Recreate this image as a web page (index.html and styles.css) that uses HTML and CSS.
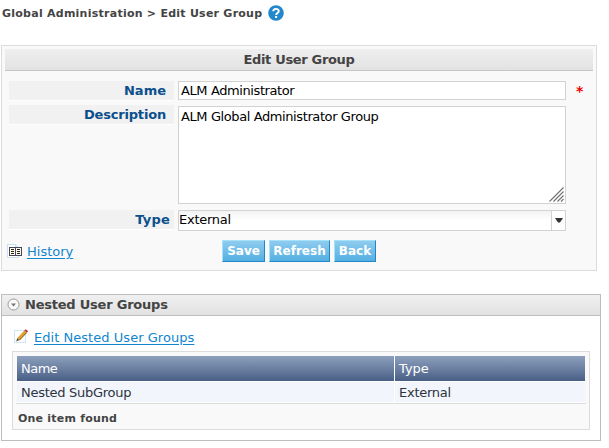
FILE: index.html
```
<!DOCTYPE html>
<html lang="en">
<head>
<meta charset="utf-8">
<title>Edit User Group</title>
<link rel="stylesheet" href="styles.css">
</head>
<body>
<header class="crumbs">
  <span class="t-crumb">Global Administration &gt; Edit User Group</span>
  <svg class="help" width="16" height="16" viewBox="0 0 16 16"><circle cx="8" cy="8" r="7.8" fill="#2388cb"/><path d="M5.2 6.3C5.2 3.1 10.8 3.1 10.8 6.1C10.8 8 8.1 8 8.1 10" fill="none" stroke="#fff" stroke-width="1.9"/><rect x="7.1" y="11" width="2" height="2" fill="#fff"/></svg>
</header>
<form class="panel">
  <h1 class="bar"><span class="t-head">Edit User Group</span></h1>
  <div class="row name">
    <label>Name</label>
    <div class="field"><span class="t-value">ALM Administrator</span></div>
    <span class="req">*</span>
  </div>
  <div class="row desc">
    <label><span class="t-desc">Description</span></label>
    <div class="field"><span class="t-value">ALM Global Administrator Group</span>
      <svg class="grip" width="15" height="15" viewBox="0 0 15 15"><path d="M.5 14.5L14.5 .5M4.5 14.5L14.5 4.5M8.5 14.5L14.5 8.5M12 14.5L14.5 12" stroke="#707070" stroke-width="1.1"/></svg>
    </div>
  </div>
  <div class="row type">
    <label><span class="t-type">Type</span></label>
    <div class="field select"><span class="t-ext">External</span><span class="arrow"><svg width="8" height="5" viewBox="0 0 8 5"><path d="M0 0H8L5 4.5H3Z" fill="#333"/></svg></span></div>
  </div>
  <div class="actions">
    <svg class="book" width="15" height="14" viewBox="0 0 15 14"><path d="M.5 .5H8.5L11.5 3.5V13.5H.5Z" fill="#fff" stroke="#c8e0f0"/><path d="M8.5 .5V3.5H11.5" fill="#d8eaf6" stroke="#c8e0f0"/><rect x="2.5" y="3.5" width="12" height="8" fill="#fff8e8" stroke="#44485c"/><path d="M8.5 3V12" stroke="#44485c"/><path d="M4 5.5H7M4 7.5H7M4 9.5H7M10 5.5H13M10 7.5H13M10 9.5H13" stroke="#222"/></svg>
    <a class="history">History</a>
    <div class="buttons">
      <button type="button" class="save">Save</button>
      <button type="button" class="refresh">Refresh</button>
      <button type="button" class="back">Back</button>
    </div>
  </div>
</form>
<section class="nested">
  <h2 class="section-head">
    <svg width="13" height="13" viewBox="0 0 13 13"><circle cx="6.5" cy="6.5" r="5.5" fill="#fafafa" stroke="#999"/><path d="M4 5.5H9L6.5 8.5Z" fill="#777"/></svg>
    <span class="t-nested">Nested User Groups</span>
  </h2>
  <div class="edit">
    <svg width="15" height="15" viewBox="0 0 15 15"><rect x=".5" y="1.5" width="11" height="12" fill="#fff" stroke="#cfe5f2"/><path d="M2.2 12.6L3.3 9L5.4 11Z" fill="#444"/><path d="M3.2 9.2L10.3 1.6L12.7 3.6L5.4 11.2Z" fill="#e0a02b"/><path d="M5.4 11.2L12.7 3.6" stroke="#815016"/><path d="M10.3 1.6L11.7 .2L14.2 2.2L12.7 3.6Z" fill="#b8323c"/></svg>
    <a class="t-edit">Edit Nested User Groups</a>
  </div>
  <div class="table-box">
    <div class="tr th"><div><span class="t-th">Name</span></div><div>Type</div></div>
    <div class="tr td"><div><span class="t-sub">Nested SubGroup</span></div><div><span class="t-ext">External</span></div></div>
    <div class="found"><span class="t-found">One item found</span></div>
  </div>
</section>
</body>
</html>
```
FILE: styles.css
```
* { box-sizing: border-box; }
body { margin: 0; background: #fff; font: 13px/16px Verdana, "DejaVu Sans", sans-serif; color: #000; }
h1, h2 { margin: 0; font-size: 13px; color: #444; }
span { white-space: nowrap; }
svg { display: block; flex: none; }
a { color: #0f86cf; text-decoration: underline; text-underline-offset: 2px; }

.t-crumb { letter-spacing: .25px; }
.t-head { letter-spacing: -.33px; }
.t-value { letter-spacing: -.4px; }
.t-desc { letter-spacing: -.18px; }
.t-type { letter-spacing: .2px; }
.t-ext { letter-spacing: -.25px; }
.t-nested { letter-spacing: -.22px; }
.t-edit { letter-spacing: .04px; }
.t-th { letter-spacing: -.5px; }
.t-sub { letter-spacing: -.27px; }
.t-found { letter-spacing: .22px; }

.crumbs { display: flex; height: 45px; padding: 5px 0 0 2px; font-size: 11px; font-weight: bold; color: #444; }
.t-crumb { position: relative; top: 1px; }
.help { margin-left: 6px; }

.panel { width: 596px; height: 226px; margin-left: 1px; padding: 3px; border: 1px solid #dcdcdc; background: #f9f9f9; }
.bar { height: 22px; padding-top: 3px; text-align: center; border-bottom: 1px solid #c5c5c5; background: linear-gradient(#efefef, #e2e2e2); }

.row { display: flex; align-items: flex-start; padding-left: 4px; }
.name { height: 24px; margin-top: 10px; }
.desc { height: 105px; }
.type { height: 30px; }
label { width: 165px; height: 20px; margin-right: 4px; padding: 2px 8px 0 0; text-align: right; font-weight: bold; color: #0b4f8c; background: #f1f1f1; border-bottom: 1px solid #fff; }
.type label { padding-right: 4px; }
.field { width: 388px; height: 19px; border: 1px solid #d2d2d2; background: #fff; padding: 1px 2px; }
.desc .field { position: relative; height: 98px; margin-top: 1px; padding-top: 2px; }
.grip { position: absolute; right: 1px; bottom: 1px; }
.type .field { display: flex; justify-content: space-between; height: 21px; padding: 1px 0 0; background: linear-gradient(#f3f3f3, #fff 50%); }
.arrow { display: flex; align-items: center; justify-content: center; width: 14px; height: 19px; margin-top: -1px; border-left: 1px solid #d2d2d2; background: #fff; }
.req { margin: 3px 0 0 10px; color: #e00; font-size: 14px; font-weight: bold; line-height: 14px; }

.actions { display: flex; padding-left: 2px; }
.book { margin: 4px 0 0; }
.history { width: 173px; margin: 4px 0 0 5px; }
.buttons { display: flex; gap: 4px; margin-left: 22px; }
button { height: 22px; padding: 0 0 1px; border: 1px solid #2086c5; border-top-color: #a5e2fa; border-left-color: #a5e2fa; background: linear-gradient(#8fccef, #55afe2); font: bold 12px/16px Verdana, "DejaVu Sans", sans-serif; color: #fff; }
.save { width: 43px; }
.refresh { width: 61px; }
.back { width: 42px; }

.nested { width: 600px; height: 147px; margin: 23px 0 0 1px; border: 1px solid #bdbdbd; }
.section-head { display: flex; align-items: center; gap: 5px; height: 21px; padding: 0 0 1px 5px; border-bottom: 1px solid #bdbdbd; background: linear-gradient(#f0f0f0, #e2e2e2); }
.edit { display: flex; gap: 5px; height: 35px; padding: 13px 0 0 12px; }
.edit a { padding-top: 1px; }
.table-box { width: 578px; height: 79px; margin-left: 10px; padding: 4px 3px; border: 1px solid #dcdcdc; background: #f9f9f9; }
.tr { display: flex; gap: 1px; margin: 0 1px; }
.tr div { width: 190px; padding-left: 4px; }
.tr div:first-child { width: 377px; }
.th { height: 25px; color: #fff; }
.th, .td { background: #fff; }
.th div { padding-top: 5px; background: linear-gradient(#8ca0bd, #4a5f86); }
.td { height: 22px; padding-top: 1px; color: #2d3340; }
.td div { height: 20px; padding-top: 3px; background: #f2f6fc; }
.found { padding: 7px 0 0 2px; border-top: 1px solid #dcdcdc; font-size: 11px; font-weight: bold; color: #444; }
```
